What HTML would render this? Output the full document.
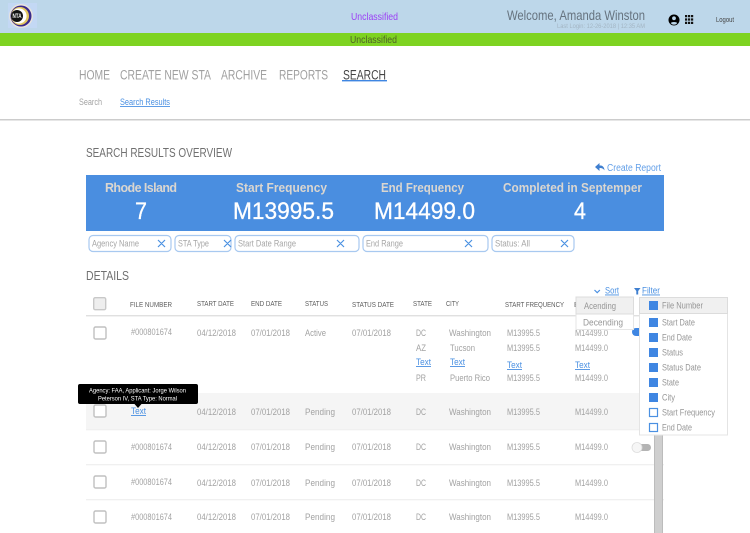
<!DOCTYPE html>
<html><head><meta charset="utf-8"><style>
html,body{margin:0;padding:0;background:#fff;width:750px;height:533px;overflow:hidden}
svg{display:block;filter:blur(.3px)}
text{font-family:"Liberation Sans",sans-serif}
.c{font-size:8.8px;fill:#a2a2a2}
.h{font-size:7.6px;fill:#5c5c5c}
.l{font-size:9px;fill:#4a90e2;text-decoration:underline}
.f{font-size:8.8px;fill:#a6a6a6}
.b{font-size:12.5px;font-weight:bold;fill:#dad6d0}
.v{font-size:24px;fill:#fff;stroke:#fff;stroke-width:.3}
.n{font-size:13.5px;fill:#a0a0a0}
.m{font-size:9px;fill:#969696}
.x{stroke:#4a90e2;stroke-width:1.2;fill:none}
.cb{fill:#fff;stroke:#c0c0c0;stroke-width:1.4}
.ln{fill:#f0f0f0}
.chk{fill:#3f86e2}
.unc{fill:#fff;stroke:#4a90e2;stroke-width:1.2}
</style></head><body>
<svg width="750" height="533" viewBox="0 0 750 533" xmlns="http://www.w3.org/2000/svg">
<rect width="750" height="33" fill="#bdd7ea"/>
<rect y="33" width="750" height="13" fill="#7ed321"/>
<rect x="8" y="3" width="29" height="25" fill="#c3d8f4"/>
<circle cx="21" cy="16" r="12" fill="#e8e4de"/>
<circle cx="21" cy="16" r="10.5" fill="#3a2a8c"/>
<circle cx="20" cy="16" r="9" fill="#e4c860"/>
<circle cx="19" cy="16" r="7.6" fill="#fff"/>
<circle cx="17" cy="16" r="6" fill="#111"/>
<text x="12.5" y="18" style="font-size:6px;font-weight:bold;fill:#fff" textLength="9" lengthAdjust="spacingAndGlyphs">NTA</text>

<text x="351" y="20" style="font-size:10.5px;fill:#9b3ff5" textLength="47" lengthAdjust="spacingAndGlyphs">Unclassified</text>
<text x="350" y="43" style="font-size:10.5px;fill:#4f5f28" textLength="47" lengthAdjust="spacingAndGlyphs">Unclassified</text>
<text x="507" y="20" style="font-size:14px;fill:#66737f" textLength="138" lengthAdjust="spacingAndGlyphs">Welcome, Amanda Winston</text>
<text x="557" y="28" style="font-size:6.5px;fill:#a3b5c3" textLength="88" lengthAdjust="spacingAndGlyphs">Last Login: 12-26-2018 | 12:35 AM</text>
<circle cx="674" cy="20" r="5.5" fill="#000"/>
<circle cx="674" cy="18.3" r="1.9" fill="#bdd7ea"/>
<path d="M670.8 23.2c.6-1.6 5.8-1.6 6.4 0a4.4 4.4 0 0 1-6.4 0z" fill="#bdd7ea"/>
<path d="M685 15h2.2v2.2H685zM688 15h2.2v2.2H688zM691 15h2.2v2.2H691zM685 18.4h2.2v2.2H685zM688 18.4h2.2v2.2H688zM691 18.4h2.2v2.2H691zM685 21.8h2.2V24H685zM688 21.8h2.2V24H688zM691 21.8h2.2V24H691z" fill="#111"/>
<text x="716" y="22" style="font-size:7px;fill:#444" textLength="18" lengthAdjust="spacingAndGlyphs">Logout</text>

<text x="79" y="79.500" class="n" textLength="31" lengthAdjust="spacingAndGlyphs">HOME</text>
<text x="120" y="79.500" class="n" textLength="91" lengthAdjust="spacingAndGlyphs">CREATE NEW STA</text>
<text x="221" y="79.500" class="n" textLength="46" lengthAdjust="spacingAndGlyphs">ARCHIVE</text>
<text x="279" y="79.500" class="n" textLength="49" lengthAdjust="spacingAndGlyphs">REPORTS</text>
<text x="343" y="79.500" class="n" style="fill:#444" textLength="43" lengthAdjust="spacingAndGlyphs">SEARCH</text>
<rect x="342" y="80" width="45" height="1.4" fill="#3f86e2"/>
<text x="79" y="105" style="font-size:8.8px;fill:#a3a3a3" textLength="23" lengthAdjust="spacingAndGlyphs">Search</text>
<text x="120" y="105" class="l" style="font-size:8.8px" textLength="50" lengthAdjust="spacingAndGlyphs">Search Results</text>
<rect y="119" width="750" height="1.5" fill="#ccc"/>

<text x="86" y="157" style="font-size:12.5px;fill:#707070" textLength="146" lengthAdjust="spacingAndGlyphs">SEARCH RESULTS OVERVIEW</text>
<path d="M595 167l4.5-4v2.4c3 0 4.8 1.6 5 5-1.2-1.8-2.6-2.4-5-2.4V171z" fill="#3f7fd0"/>
<text x="607" y="171" style="font-size:10px;fill:#629fe8" textLength="54" lengthAdjust="spacingAndGlyphs">Create Report</text>
<rect x="86" y="175" width="578" height="56" fill="#4a8ee0"/>
<text x="105" y="192" class="b" textLength="72" lengthAdjust="spacing">Rhode Island</text>
<text x="236" y="192" class="b" textLength="91" lengthAdjust="spacingAndGlyphs">Start Frequency</text>
<text x="381" y="192" class="b" textLength="83" lengthAdjust="spacingAndGlyphs">End Frequency</text>
<text x="503" y="192" class="b" textLength="139" lengthAdjust="spacingAndGlyphs">Completed in Septemper</text>
<text x="135" y="219" class="v" textLength="12" lengthAdjust="spacingAndGlyphs">7</text>
<text x="233" y="219" class="v" textLength="101" lengthAdjust="spacingAndGlyphs">M13995.5</text>
<text x="374" y="219" class="v" textLength="101" lengthAdjust="spacingAndGlyphs">M14499.0</text>
<text x="574" y="219" class="v" textLength="12" lengthAdjust="spacingAndGlyphs">4</text>

<g fill="#fff" stroke="#a8c9f0" stroke-width="1.2">
<rect x="89" y="235.5" width="82" height="16" rx="4"/>
<rect x="175" y="235.5" width="56" height="16" rx="4"/>
<rect x="235" y="235.5" width="124" height="16" rx="4"/>
<rect x="363" y="235.5" width="125" height="16" rx="4"/>
<rect x="492" y="235.5" width="82" height="16" rx="4"/>
</g>
<text x="92" y="246.5" class="f" textLength="47" lengthAdjust="spacingAndGlyphs">Agency Name</text>
<text x="178" y="246.5" class="f" textLength="31" lengthAdjust="spacingAndGlyphs">STA Type</text>
<text x="238" y="246.5" class="f" textLength="58" lengthAdjust="spacingAndGlyphs">Start Date Range</text>
<text x="366" y="246.5" class="f" textLength="37" lengthAdjust="spacingAndGlyphs">End Range</text>
<text x="495" y="246.5" class="f" textLength="35" lengthAdjust="spacingAndGlyphs">Status: All</text>
<path class="x" d="M158 240l7 7m0-7l-7 7M224 240l7 7m0-7l-7 7M337 240l7 7m0-7l-7 7M465 240l7 7m0-7l-7 7M561 240l7 7m0-7l-7 7"/>

<text x="86" y="280" style="font-size:12.5px;fill:#707070" textLength="43" lengthAdjust="spacingAndGlyphs">DETAILS</text>

<!-- table rows -->
<rect x="86" y="393" width="568" height="36" fill="#f5f5f5"/>
<rect x="86" y="315" width="578" height="1.4" fill="#e0e0e0"/>
<rect x="86" y="429" width="578" height="1.3" class="ln"/>
<rect x="86" y="464" width="578" height="1.3" class="ln"/>
<rect x="86" y="499" width="578" height="1.3" class="ln"/>

<rect x="93.700" y="297.700" width="12" height="12" rx="1.500" fill="#eee" stroke="#c8c8c8" stroke-width="1.4"/>
<text x="130" y="307" class="h" textLength="42" lengthAdjust="spacingAndGlyphs">FILE NUMBER</text>
<text x="197" y="306" class="h" textLength="37" lengthAdjust="spacingAndGlyphs">START DATE</text>
<text x="251" y="306" class="h" textLength="31" lengthAdjust="spacingAndGlyphs">END DATE</text>
<text x="305" y="306" class="h" textLength="23" lengthAdjust="spacingAndGlyphs">STATUS</text>
<text x="352" y="307" class="h" textLength="42" lengthAdjust="spacingAndGlyphs">STATUS DATE</text>
<text x="413" y="306" class="h" textLength="19" lengthAdjust="spacingAndGlyphs">STATE</text>
<text x="446" y="306" class="h" textLength="13" lengthAdjust="spacingAndGlyphs">CITY</text>
<text x="505" y="307" class="h" textLength="59" lengthAdjust="spacingAndGlyphs">START FREQUENCY</text>
<text x="574" y="307" class="h">E</text>

<rect class="cb" x="94" y="327" width="12" height="12" rx="1.500"/>
<rect class="cb" x="94" y="405" width="12" height="12" rx="1.500"/>
<rect class="cb" x="94" y="441" width="12" height="12" rx="1.500"/>
<rect class="cb" x="94" y="476" width="12" height="12" rx="1.500"/>
<rect class="cb" x="94" y="511" width="12" height="12" rx="1.500"/>

<!-- row 1 -->
<text x="131" y="335" class="c" textLength="41" lengthAdjust="spacingAndGlyphs">#000801674</text>
<text x="197" y="336" class="c" textLength="39" lengthAdjust="spacingAndGlyphs">04/12/2018</text>
<text x="251" y="336" class="c" textLength="39" lengthAdjust="spacingAndGlyphs">07/01/2018</text>
<text x="305" y="336" class="c" textLength="21" lengthAdjust="spacingAndGlyphs">Active</text>
<text x="352" y="336" class="c" textLength="39" lengthAdjust="spacingAndGlyphs">07/01/2018</text>
<text x="416" y="336" class="c" textLength="10" lengthAdjust="spacingAndGlyphs">DC</text>
<text x="449" y="336" class="c" textLength="42" lengthAdjust="spacingAndGlyphs">Washington</text>
<text x="507" y="336" class="c" textLength="33" lengthAdjust="spacingAndGlyphs">M13995.5</text>
<text x="575" y="336" class="c" textLength="33" lengthAdjust="spacingAndGlyphs">M14499.0</text>
<text x="416" y="351" class="c" textLength="10" lengthAdjust="spacingAndGlyphs">AZ</text>
<text x="450" y="351" class="c" textLength="25" lengthAdjust="spacingAndGlyphs">Tucson</text>
<text x="507" y="351" class="c" textLength="33" lengthAdjust="spacingAndGlyphs">M13995.5</text>
<text x="575" y="351" class="c" textLength="33" lengthAdjust="spacingAndGlyphs">M14499.0</text>
<text x="416" y="365" class="l" textLength="15" lengthAdjust="spacingAndGlyphs">Text</text>
<text x="450" y="365" class="l" textLength="15" lengthAdjust="spacingAndGlyphs">Text</text>
<text x="507" y="368" class="l" textLength="15" lengthAdjust="spacingAndGlyphs">Text</text>
<text x="575" y="368" class="l" textLength="15" lengthAdjust="spacingAndGlyphs">Text</text>
<text x="416" y="381" class="c" textLength="10" lengthAdjust="spacingAndGlyphs">PR</text>
<text x="450" y="381" class="c" textLength="40" lengthAdjust="spacingAndGlyphs">Puerto Rico</text>
<text x="507" y="381" class="c" textLength="33" lengthAdjust="spacingAndGlyphs">M13995.5</text>
<text x="575" y="381" class="c" textLength="33" lengthAdjust="spacingAndGlyphs">M14499.0</text>

<!-- row 2 -->
<text x="131" y="414" class="l" textLength="15" lengthAdjust="spacingAndGlyphs">Text</text>
<text x="197" y="415" class="c" textLength="39" lengthAdjust="spacingAndGlyphs">04/12/2018</text>
<text x="251" y="415" class="c" textLength="39" lengthAdjust="spacingAndGlyphs">07/01/2018</text>
<text x="305" y="415" class="c" textLength="30" lengthAdjust="spacingAndGlyphs">Pending</text>
<text x="352" y="415" class="c" textLength="39" lengthAdjust="spacingAndGlyphs">07/01/2018</text>
<text x="416" y="415" class="c" textLength="10" lengthAdjust="spacingAndGlyphs">DC</text>
<text x="449" y="415" class="c" textLength="42" lengthAdjust="spacingAndGlyphs">Washington</text>
<text x="507" y="415" class="c" textLength="33" lengthAdjust="spacingAndGlyphs">M13995.5</text>
<text x="575" y="415" class="c" textLength="33" lengthAdjust="spacingAndGlyphs">M14499.0</text>

<!-- row 3 -->
<text x="131" y="450" class="c" textLength="41" lengthAdjust="spacingAndGlyphs">#000801674</text>
<text x="197" y="450" class="c" textLength="39" lengthAdjust="spacingAndGlyphs">04/12/2018</text>
<text x="251" y="450" class="c" textLength="39" lengthAdjust="spacingAndGlyphs">07/01/2018</text>
<text x="305" y="450" class="c" textLength="30" lengthAdjust="spacingAndGlyphs">Pending</text>
<text x="352" y="450" class="c" textLength="39" lengthAdjust="spacingAndGlyphs">07/01/2018</text>
<text x="416" y="450" class="c" textLength="10" lengthAdjust="spacingAndGlyphs">DC</text>
<text x="449" y="450" class="c" textLength="42" lengthAdjust="spacingAndGlyphs">Washington</text>
<text x="507" y="450" class="c" textLength="33" lengthAdjust="spacingAndGlyphs">M13995.5</text>
<text x="575" y="450" class="c" textLength="33" lengthAdjust="spacingAndGlyphs">M14499.0</text>

<!-- row 4 -->
<text x="131" y="485" class="c" textLength="41" lengthAdjust="spacingAndGlyphs">#000801674</text>
<text x="197" y="486" class="c" textLength="39" lengthAdjust="spacingAndGlyphs">04/12/2018</text>
<text x="251" y="486" class="c" textLength="39" lengthAdjust="spacingAndGlyphs">07/01/2018</text>
<text x="305" y="486" class="c" textLength="30" lengthAdjust="spacingAndGlyphs">Pending</text>
<text x="352" y="486" class="c" textLength="39" lengthAdjust="spacingAndGlyphs">07/01/2018</text>
<text x="416" y="486" class="c" textLength="10" lengthAdjust="spacingAndGlyphs">DC</text>
<text x="449" y="486" class="c" textLength="42" lengthAdjust="spacingAndGlyphs">Washington</text>
<text x="507" y="486" class="c" textLength="33" lengthAdjust="spacingAndGlyphs">M13995.5</text>
<text x="575" y="486" class="c" textLength="33" lengthAdjust="spacingAndGlyphs">M14499.0</text>

<!-- row 5 -->
<text x="131" y="520" class="c" textLength="41" lengthAdjust="spacingAndGlyphs">#000801674</text>
<text x="197" y="520" class="c" textLength="39" lengthAdjust="spacingAndGlyphs">04/12/2018</text>
<text x="251" y="520" class="c" textLength="39" lengthAdjust="spacingAndGlyphs">07/01/2018</text>
<text x="305" y="520" class="c" textLength="30" lengthAdjust="spacingAndGlyphs">Pending</text>
<text x="352" y="520" class="c" textLength="39" lengthAdjust="spacingAndGlyphs">07/01/2018</text>
<text x="416" y="520" class="c" textLength="10" lengthAdjust="spacingAndGlyphs">DC</text>
<text x="449" y="520" class="c" textLength="42" lengthAdjust="spacingAndGlyphs">Washington</text>
<text x="507" y="520" class="c" textLength="33" lengthAdjust="spacingAndGlyphs">M13995.5</text>
<text x="575" y="520" class="c" textLength="33" lengthAdjust="spacingAndGlyphs">M14499.0</text>

<!-- toggles & scrollbar -->
<rect x="654" y="430" width="9" height="103" fill="#cfcfcf"/>
<rect x="654" y="430" width="1" height="103" fill="#bcbcbc"/>
<rect x="662" y="430" width="1" height="103" fill="#bcbcbc"/>
<rect x="632" y="328" width="12" height="8" rx="4" fill="#3f86e2"/>
<rect x="637" y="444" width="14" height="7" rx="3.500" fill="#b4b4b4"/>
<circle cx="637" cy="447.500" r="5" fill="#f6f6f6" stroke="#ddd" stroke-width=".8"/>

<!-- tooltip -->
<rect x="78" y="384" width="120" height="20" rx="2" fill="#000"/>
<path d="M134.500 404h7l-3.500 4z" fill="#000"/>
<text x="89" y="392.500" style="font-size:6px;fill:#fff" textLength="97" lengthAdjust="spacingAndGlyphs">Agency: FAA, Applicant: Jorge Wilson</text>
<text x="98" y="400.500" style="font-size:6px;fill:#fff" textLength="79" lengthAdjust="spacingAndGlyphs">Peterson IV, STA Type: Normal</text>

<!-- sort/filter -->
<path d="M594.500 290l2.700 2.700 2.700-2.700" fill="none" stroke="#4a90e2" stroke-width="1.200"/>
<text x="605" y="293.500" class="l" textLength="14" lengthAdjust="spacingAndGlyphs">Sort</text>
<path d="M634 288h6.500l-2.300 3v3.500h-1.900v-3.500z" fill="#3f7fd0"/>
<text x="642" y="293.500" class="l" textLength="18" lengthAdjust="spacingAndGlyphs">Filter</text>

<rect x="576" y="297" width="57.500" height="32.500" fill="#fff" stroke="#e6e6e6"/>
<rect x="576" y="297" width="57.500" height="17" fill="#f0f0f0" stroke="#dcdcdc"/>
<text x="584" y="309" class="m" textLength="32" lengthAdjust="spacingAndGlyphs">Acending</text>
<text x="583" y="325.500" class="m" textLength="40" lengthAdjust="spacingAndGlyphs">Decending</text>

<rect x="639.500" y="297.500" width="88" height="137.500" fill="#fff" stroke="#e4e4e4"/>
<rect x="639.500" y="297.500" width="88" height="16" fill="#f0f0f0" stroke="#dcdcdc"/>
<rect class="chk" x="649" y="301" width="9" height="9"/>
<rect class="chk" x="649" y="318" width="9" height="9"/>
<rect class="chk" x="649" y="333" width="9" height="9"/>
<rect class="chk" x="649" y="348" width="9" height="9"/>
<rect class="chk" x="649" y="363" width="9" height="9"/>
<rect class="chk" x="649" y="378" width="9" height="9"/>
<rect class="chk" x="649" y="393" width="9" height="9"/>
<rect class="unc" x="649.500" y="408.500" width="8" height="8"/>
<rect class="unc" x="649.500" y="423.500" width="8" height="8"/>
<text x="662" y="308.500" class="m" textLength="41" lengthAdjust="spacingAndGlyphs">File Number</text>
<text x="662" y="325.500" class="m" textLength="33" lengthAdjust="spacingAndGlyphs">Start Date</text>
<text x="662" y="340.500" class="m" textLength="30" lengthAdjust="spacingAndGlyphs">End Date</text>
<text x="662" y="355.500" class="m" textLength="21" lengthAdjust="spacingAndGlyphs">Status</text>
<text x="662" y="370.500" class="m" textLength="39" lengthAdjust="spacingAndGlyphs">Status Date</text>
<text x="662" y="385.500" class="m" textLength="17" lengthAdjust="spacingAndGlyphs">State</text>
<text x="662" y="400.500" class="m" textLength="13" lengthAdjust="spacingAndGlyphs">City</text>
<text x="662" y="415.500" class="m" textLength="53" lengthAdjust="spacingAndGlyphs">Start Frequency</text>
<text x="662" y="430.500" class="m" textLength="30" lengthAdjust="spacingAndGlyphs">End Date</text>
</svg>
</body></html>
